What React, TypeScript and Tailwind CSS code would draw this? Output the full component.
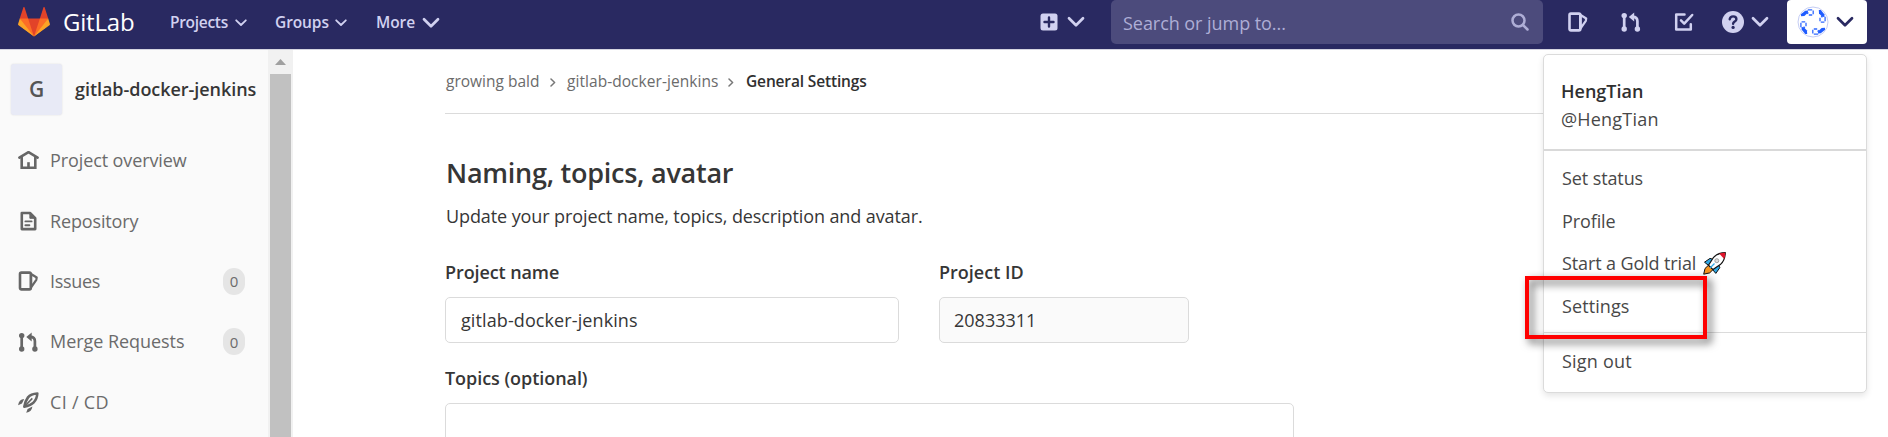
import React from "react";

type IconProps = { className?: string };

function Tanuki() {
  return (
    <svg className="h-8 w-8" viewBox="0 0 36 36">
      <path fill="#e24329" d="M2 14l9.38 9v-9l-4-12.28c-.205-.632-1.176-.632-1.38 0z" />
      <path fill="#e24329" d="M34 14l-9.38 9v-9l4-12.28c.205-.632 1.176-.632 1.38 0z" />
      <path fill="#e24329" d="M18 34.38L3 14h30z" />
      <path fill="#fc6d26" d="M18 34.38L11.38 14H2l4 11z" />
      <path fill="#fc6d26" d="M18 34.38L24.62 14H34l-4 11z" />
      <path fill="#fca326" d="M2 14L.1 20.16c-.18.565 0 1.2.5 1.56l17.42 12.66z" />
      <path fill="#fca326" d="M34 14l1.9 6.16c.18.565 0 1.2-.5 1.56L18 34.38z" />
    </svg>
  );
}

function Chevron({ className }: IconProps) {
  return (
    <svg className={className} viewBox="0 0 18 12" fill="none" stroke="currentColor" strokeWidth="2.7" strokeLinecap="round" strokeLinejoin="round">
      <path d="M2 2.2l7 7 7-7" />
    </svg>
  );
}

function SmallChevron({ className }: IconProps) {
  return (
    <svg className={className} viewBox="0 0 12 8" fill="none" stroke="currentColor" strokeWidth="1.8" strokeLinecap="round" strokeLinejoin="round">
      <path d="M1.2 1.3L6 6l4.8-4.7" />
    </svg>
  );
}

function Crumb() {
  return (
    <svg className="h-[9px] w-[6px] text-[#777]" viewBox="0 0 6 9" fill="none" stroke="currentColor" strokeWidth="1.5" strokeLinecap="round" strokeLinejoin="round">
      <path d="M1 1l3.6 3.5L1 8" />
    </svg>
  );
}

function IssuesIcon({ className }: IconProps) {
  return (
    <svg className={className} viewBox="0 0 20 20" fill="none" stroke="currentColor" strokeWidth="2.6" strokeLinejoin="round">
      <rect x="1.5" y="1.6" width="10.8" height="16.8" rx="1.4" />
      <path d="M12.6 3l5.6 3.5-.4 2.3-5.2 7.6z" strokeWidth="2.2" />
    </svg>
  );
}

function MergeIcon({ className }: IconProps) {
  return (
    <svg className={className} viewBox="0 0 20 20" fill="none" stroke="currentColor" strokeWidth="2.7">
      <path d="M3.2 3.5v13M16.4 16.5V9.2c0-2.9-1.6-4.4-4.6-4.4" />
      <g fill="currentColor" stroke="none">
        <circle cx="3.2" cy="3.6" r="2.7" />
        <circle cx="3.2" cy="17" r="2.7" />
        <circle cx="16.4" cy="17" r="2.7" />
        <path d="M7.8 4.9L13.2.4v9z" />
      </g>
    </svg>
  );
}

function HomeIcon({ className }: IconProps) {
  return (
    <svg className={className} viewBox="0 0 21 20" fill="none" stroke="currentColor" strokeWidth="2.6" strokeLinecap="round" strokeLinejoin="round">
      <path d="M1.4 7.6l9.1-5.4 9.1 5.4" />
      <path d="M3.7 7.5v10.3h13.6V7.5" strokeLinejoin="miter" />
      <path d="M10.5 12.2v5" strokeLinecap="butt" />
    </svg>
  );
}

function DocIcon({ className }: IconProps) {
  return (
    <svg className={className} viewBox="0 0 20 20" fill="none" stroke="currentColor" strokeWidth="2.6" strokeLinejoin="round">
      <path d="M3.3 2h8.2l5.2 5.2v10.9H3.3z" />
      <path d="M11.4 1.5v5.8h5.2z" fill="currentColor" strokeWidth="1" />
      <path d="M6.9 10.4h6.2M6.9 14.2h4" strokeWidth="1.9" strokeLinecap="round" />
    </svg>
  );
}

function RocketLineIcon({ className }: IconProps) {
  return (
    <svg className={className} viewBox="0 0 21 21" fill="none" stroke="currentColor" strokeWidth="2.6" strokeLinejoin="round">
      <path d="M19.3 1.5c-4.3.2-7.2 1.3-9.3 3.9-1.8 2.4-3 5-3.7 9.3 4.2-.7 7-2 9.200-4.100 2.500-2.400 3.600-5 3.800-9.100z" />
      <path d="M14.3 6.4L7 14" strokeWidth="1.6" />
      <path d="M6.2 6.9C2.5 7.2.6 9.3.1 13.2l3.900-1.600zM14.400 14.600c-.3 3.500-2.300 5.600-6.200 6.200l1.400-3.900z" fill="currentColor" stroke="none" />
    </svg>
  );
}

function TodoIcon({ className }: IconProps) {
  return (
    <svg className={className} viewBox="0 0 20 20" fill="none" stroke="currentColor" strokeWidth="2.5" strokeLinecap="round" strokeLinejoin="round">
      <path d="M10.5 2.6H2.2v14.8h14.6v-5.2" />
      <path d="M7 8.4l3.2 3.2 8-8.6" />
    </svg>
  );
}

function RocketEmoji() {
  return (
    <svg className="h-[23px] w-[23px]" viewBox="0 0 23 23" strokeLinejoin="round">
      <path d="M1.5 10.2l5.500-3.800 3.500 1-5 6z" fill="#2ea8e6" stroke="#111" strokeWidth="1" />
      <path d="M12.800 21.400l4-5.700-1.300-3.200-6 5z" fill="#2ea8e6" stroke="#111" strokeWidth="1" />
      <path d="M5.500 13.200L2 16.500.7 22.200l6-1.300 3.300-3.300z" fill="#f7941e" stroke="#111" strokeWidth="1" />
      <path d="M22.300.7c-5 .1-9 1.500-12 5L5.500 13.200l4.500 4.400 7.300-5c3.400-3 4.900-7 5-11.900z" fill="#fff" stroke="#111" strokeWidth="1.2" />
      <path d="M22.300.7c-2.300 0-4.200.3-6 1l4.900 5.200c.7-1.800 1.100-3.900 1.100-6.200z" fill="#e0142c" />
      <circle cx="13.8" cy="8.7" r="2" fill="#ddd" stroke="#999" strokeWidth=".9" />
      <path d="M11.5 11.5L7 16" stroke="#2ea8e6" strokeWidth="1.2" />
    </svg>
  );
}

function Identicon() {
  const quarter = (
    <>
      <path d="M10.8 3.9h4.400M16.200 4.600v3.600M15.200 9h-3.400M10 7.800l1.400-1.200" fill="none" stroke="#2f68ff" strokeWidth="1.3" />
      <path d="M21.800 4.100l2-.2 3.500 4.300.2 2.900-2.300-.3-3.200-3.400z" fill="#1f5cff" />
    </>
  );
  return (
    <svg className="h-8 w-8" viewBox="0 0 32 32">
      <circle cx="16" cy="16" r="15" fill="#fff" stroke="#c4ccf4" strokeWidth="1" />
      <g>{quarter}</g>
      <g transform="rotate(90 16 16)">{quarter}</g>
      <g transform="rotate(180 16 16)">{quarter}</g>
      <g transform="rotate(270 16 16)">{quarter}</g>
    </svg>
  );
}

function Header() {
  return (
    <header className="flex h-[50px] shrink-0 border-b border-[#d4d4e0] bg-[#292961] text-[#d1d1f0]">
      <div className="flex h-11 w-[1111px] items-center">
        <div className="ml-[18px] flex w-[152px] items-center">
          <Tanuki />
          <span className="ml-[13px] text-[24px] leading-none tracking-[-0.2px] text-white">GitLab</span>
        </div>
        <div className="flex w-[105px] items-center pt-px text-[15.5px] font-semibold">
          <span className="w-[65px] tracking-[-0.3px]">Projects</span>
          <SmallChevron className="h-2 w-3" />
        </div>
        <div className="flex w-[101px] items-center pt-px text-[15.5px] font-semibold">
          <span className="w-[60px] tracking-[-0.1px]">Groups</span>
          <SmallChevron className="h-2 w-3" />
        </div>
        <div className="flex items-center pt-px text-[15.5px] font-semibold">
          <span className="w-[46px] tracking-[-0.1px]">More</span>
          <Chevron className="h-3 w-[18px]" />
        </div>
        <div className="ml-auto flex items-center gap-[9px] pr-[26px]">
          <svg className="h-[18px] w-[18px]" viewBox="0 0 18 18">
            <rect x=".5" y=".5" width="17" height="17" rx="2.5" fill="currentColor" />
            <path d="M9 4.5v9M4.5 9h9" stroke="#292961" strokeWidth="2.4" strokeLinecap="round" />
          </svg>
          <Chevron className="h-3 w-[18px]" />
        </div>
      </div>
      <div className="flex h-11 w-[432px] items-center justify-between rounded-[5px] bg-[#4c4b7c] pr-[14px] pl-[12px] text-[#aeaed6]">
        <span className="pt-0.5 text-[18px] tracking-[-0.05px]">Search or jump to...</span>
        <svg className="h-[18px] w-[18px]" viewBox="0 0 18 18" fill="none" stroke="currentColor" strokeWidth="2.5" strokeLinecap="round">
          <circle cx="7.5" cy="7.5" r="6" />
          <path d="M12 12l4.5 4.5" />
        </svg>
      </div>
      <div className="flex h-11 items-center pl-[25px]">
        <IssuesIcon className="h-5 w-5" />
        <MergeIcon className="ml-[33px] h-5 w-5" />
        <TodoIcon className="ml-[33px] h-5 w-5" />
        <svg className="ml-[28px] h-[22px] w-[22px]" viewBox="0 0 22 22">
          <circle cx="11" cy="11" r="11" fill="currentColor" />
          <path d="M7.7 8.3C8 6.4 9.3 5.4 11.1 5.400c1.900 0 3.300 1.100 3.300 2.800 0 2.500-3.300 2.300-3.300 4.600" fill="none" stroke="#292961" strokeWidth="2.4" strokeLinecap="round" />
          <circle cx="11.1" cy="16.4" r="1.6" fill="#292961" />
        </svg>
        <Chevron className="ml-[7px] h-3 w-[18px]" />
        <div className="ml-[18px] flex h-11 w-20 items-center rounded-[4px] bg-white pl-[10px] text-[#292961]">
          <Identicon />
          <Chevron className="ml-[7px] h-3 w-[18px]" />
        </div>
      </div>
    </header>
  );
}

type NavRowProps = { icon: React.ReactNode; label: string; className?: string; count?: string };

function NavRow({ icon, label, className, count }: NavRowProps) {
  return (
    <div className="flex h-[60.5px] items-center pr-[23px] pl-[18px]">
      {icon}
      <span className={className}>{label}</span>
      {count && (
        <span className="ml-auto flex h-[27px] w-[22px] items-center justify-center rounded-full bg-[#e5e5e5] text-[15px]">{count}</span>
      )}
    </div>
  );
}

function Sidebar() {
  return (
    <aside className="flex w-[293px] shrink-0">
      <div className="w-[268px] bg-[#fafafa] pt-[14px] text-[18px] text-[#6b6b6b]">
        <div className="flex items-center pl-[11px]">
          <span className="flex h-[51px] w-[51px] items-center justify-center rounded-[3px] bg-[#e8eaf6] text-[21px] font-semibold text-[#555] shadow-[0_0_2px_rgba(0,0,0,0.12)]">G</span>
          <span className="ml-[13px] font-semibold tracking-[-0.05px] whitespace-nowrap text-[#363636]">gitlab-docker-jenkins</span>
        </div>
        <div className="pt-[15px]">
          <NavRow icon={<HomeIcon className="h-5 w-[21px] text-[#666]" />} label="Project overview" className="ml-[11px] tracking-[-0.1px]" />
          <NavRow icon={<DocIcon className="h-5 w-[21px] text-[#666]" />} label="Repository" className="ml-[11px] pt-px tracking-[-0.15px]" />
          <NavRow icon={<IssuesIcon className="h-5 w-[21px] text-[#666]" />} label="Issues" className="ml-[11px] tracking-[-0.3px]" count="0" />
          <NavRow icon={<MergeIcon className="h-5 w-[21px] text-[#666]" />} label="Merge Requests" className="ml-[11px] tracking-[-0.05px]" count="0" />
          <NavRow icon={<RocketLineIcon className="h-[21px] w-[21px] text-[#666]" />} label="CI / CD" className="ml-[11px] tracking-[0.3px]" />
        </div>
      </div>
      <div className="flex w-[25px] flex-col items-center bg-[#f1f1f1] pt-[9px]">
        <svg className="h-[6px] w-[11px]" viewBox="0 0 11 6">
          <path d="M0 6L5.5 0 11 6z" fill="#a0a0a0" />
        </svg>
        <div className="mt-[9px] w-[21px] flex-1 bg-[#c1c1c1]" />
      </div>
    </aside>
  );
}

function Content() {
  return (
    <main className="min-w-0 flex-1 pl-[152px] text-[18px] text-[#363636]">
      <nav className="flex h-[64px] w-[1290px] items-center border-b border-[#dbdbdb] pt-px pl-px text-[15.5px] text-[#6b6b6b]">
        <span className="w-[104px]">growing bald</span>
        <Crumb />
        <span className="ml-[11px] w-[161px] tracking-[0.05px]">gitlab-docker-jenkins</span>
        <Crumb />
        <span className="ml-[12px] font-semibold tracking-[-0.15px] text-[#303030]">General Settings</span>
      </nav>
      <h1 className="mt-[41px] pl-px text-[27px] leading-[36px] font-semibold tracking-[-0.25px]">Naming, topics, avatar</h1>
      <p className="mt-[13px] pl-px leading-[24px] tracking-[-0.1px]">Update your project name, topics, description and avatar.</p>
      <div className="mt-[32px] flex gap-10">
        <div className="w-[454px]">
          <div className="leading-6 font-semibold tracking-[-0.1px]">Project name</div>
          <div className="mt-[13px] flex h-[46px] items-center rounded-[5px] border border-[#dbdbdb] pl-[15px] tracking-[0.1px]">gitlab-docker-jenkins</div>
        </div>
        <div className="w-[250px]">
          <div className="leading-6 font-semibold">Project ID</div>
          <div className="mt-[13px] flex h-[46px] items-center rounded-[5px] border border-[#dbdbdb] bg-[#fafafa] pl-[14px]">20833311</div>
        </div>
      </div>
      <div className="mt-[23px] leading-6 font-semibold tracking-[-0.05px]">Topics (optional)</div>
      <div className="mt-[13px] h-[80px] w-[849px] rounded-[5px] border border-[#dbdbdb]" />
    </main>
  );
}

function UserMenu() {
  return (
    <div className="absolute top-[54px] left-[1543px] h-[339px] w-[324px] rounded-[5px] border border-[#dbdbdb] bg-white text-[18px] text-[#484848] shadow-[0_3px_6px_rgba(0,0,0,0.1)]">
      <div className="h-[96px] border-b-2 border-[#d9d9d9] pt-[22px] pl-[17px] leading-7">
        <div className="font-semibold text-[#303030]">HengTian</div>
        <div className="tracking-[0.2px]">@HengTian</div>
      </div>
      <div className="h-[182px] border-b border-[#dbdbdb] pt-[6px] pl-[18px] leading-[42.5px]">
        <div className="tracking-[-0.1px]">Set status</div>
        <div className="tracking-[-0.1px]">Profile</div>
        <div className="flex items-center gap-[7px] tracking-[-0.12px]">
          <span>Start a Gold trial</span>
          <RocketEmoji />
        </div>
        <div className="tracking-[0.1px]">Settings</div>
      </div>
      <div className="pt-[7px] pl-[18px] leading-[42.5px] tracking-[0.2px]">Sign out</div>
      <div className="absolute top-[221px] left-[-19px] h-[63px] w-[182px] border-4 border-[#fe0000] drop-shadow-[4px_4px_4px_rgba(0,0,0,0.65)]" />
    </div>
  );
}

export default function App() {
  return (
    <div className="relative flex h-[437px] w-[1888px] flex-col overflow-hidden bg-white font-['Open_Sans','Noto_Sans',sans-serif]">
      <Header />
      <div className="flex min-h-0 flex-1">
        <Sidebar />
        <Content />
      </div>
      <UserMenu />
    </div>
  );
}
